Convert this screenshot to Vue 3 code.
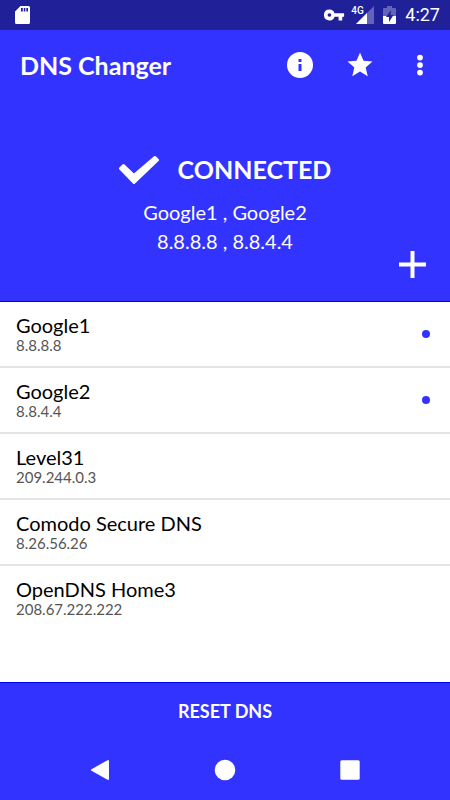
<script setup>
import { ref, computed } from 'vue'

const servers = ref([
  { name: 'Google1', address: '8.8.8.8', active: true },
  { name: 'Google2', address: '8.8.4.4', active: true },
  { name: 'Level31', address: '209.244.0.3', active: false },
  { name: 'Comodo Secure DNS', address: '8.26.56.26', active: false },
  { name: 'OpenDNS Home3', address: '208.67.222.222', active: false },
])

const active = computed(() => servers.value.filter((s) => s.active))
const activeNames = computed(() => active.value.map((s) => s.name).join(' , '))
const activeAddresses = computed(() => active.value.map((s) => s.address).join(' , '))
</script>

<template>
  <div class="app">
    <div class="status-bar">
      <svg class="sd" width="15" height="18" viewBox="0 0 15 18" aria-hidden="true">
        <path fill="#fff" fill-rule="evenodd" d="M5.500 0H13.500Q15 0 15 1.500V16.500Q15 18 13.500 18H1.500Q0 18 0 16.500V5.500ZM6 2V5.500H7.800V2ZM8.800 2V5.500H10.300V2ZM11.300 2V5.500H13V2Z" />
      </svg>
      <div class="status-icons">
        <svg class="key" width="22" height="22" viewBox="0 0 24 24" aria-hidden="true">
          <path fill="#fff" d="M12.650 10A5.990 5.990 0 0 0 7 6a6 6 0 1 0 5.650 8H17v4h4v-4h2v-4H12.650zM7 14a2 2 0 1 1 0-4 2 2 0 0 1 0 4z" />
        </svg>
        <div class="signal">
          <span class="network">4G</span>
          <svg width="18" height="18" viewBox="0 0 18 18" aria-hidden="true">
            <path fill="#6363b8" d="M18 0V18H0Z" />
            <path fill="#fff" d="M11 7V18H0Z" />
          </svg>
        </div>
        <svg class="battery" width="13" height="18" viewBox="0 0 13 18" aria-hidden="true">
          <path fill="#6363b8" d="M4 0H9V2H12Q13 2 13 3V10H0V3Q0 2 1 2H4Z" />
          <path fill="#fff" d="M0 10H13V17Q13 18 12 18H1Q0 18 0 17Z" />
          <path fill="#202099" d="M8 4L3 11H6V16L10.500 9H7.500Z" />
        </svg>
        <time class="clock">4:27</time>
      </div>
    </div>

    <header class="toolbar">
      <h1>DNS Changer</h1>
      <div class="actions">
        <button type="button" aria-label="Information">
          <svg width="32" height="32" viewBox="0 0 32 32">
            <path fill="#fff" fill-rule="evenodd" d="M16 3a13 13 0 1 0 0 26 13 13 0 0 0 0-26zM14.500 10h3v3h-3zM14.500 15h3v7h-3z" />
          </svg>
        </button>
        <button type="button" aria-label="Rate">
          <svg width="30" height="30" viewBox="0 0 24 24">
            <path fill="#fff" d="M12 17.270 18.180 21l-1.640-7.030L22 9.240l-7.190-.61L12 2 9.190 8.630 2 9.240l5.460 4.730L5.820 21z" />
          </svg>
        </button>
        <button type="button" aria-label="More options">
          <svg width="30" height="30" viewBox="0 0 24 24" fill="#fff">
            <circle cx="12" cy="6" r="2.300" />
            <circle cx="12" cy="12" r="2.300" />
            <circle cx="12" cy="18" r="2.300" />
          </svg>
        </button>
      </div>
    </header>

    <section class="hero">
      <div class="state">
        <svg width="40" height="30" viewBox="0 0 40 30" aria-hidden="true">
          <path fill="#fff" stroke="#fff" stroke-width="3" stroke-linejoin="round" d="M4.500 10.500L15 20.500L36 2.500L38.500 5L15 27.500L1.500 13.500Z" />
        </svg>
        <strong>CONNECTED</strong>
      </div>
      <p>{{ activeNames }}</p>
      <p>{{ activeAddresses }}</p>
      <button class="add" type="button" aria-label="Add server">
        <svg width="27" height="27" viewBox="0 0 27 27">
          <path stroke="#fff" stroke-width="4" d="M13.500 0V27M0 13.500H27" />
        </svg>
      </button>
    </section>

    <main>
      <ul class="servers">
        <li v-for="server in servers" :key="server.name">
          <div class="entry">
            <div class="name">{{ server.name }}</div>
            <div class="address">{{ server.address }}</div>
          </div>
          <span v-if="server.active" class="dot"></span>
        </li>
      </ul>
    </main>

    <footer>
      <button class="reset" type="button">RESET DNS</button>
      <nav>
        <button type="button" aria-label="Back">
          <svg width="22" height="22" viewBox="0 0 22 22">
            <path fill="#fff" stroke="#fff" stroke-width="2" stroke-linejoin="round" d="M19 2V20L3 11Z" />
          </svg>
        </button>
        <button type="button" aria-label="Home">
          <svg width="22" height="22" viewBox="0 0 22 22">
            <circle cx="11" cy="11" r="10.300" fill="#fff" />
          </svg>
        </button>
        <button type="button" aria-label="Recent apps">
          <svg width="22" height="22" viewBox="0 0 22 22">
            <rect x="1.300" y="1.300" width="19.400" height="19.400" rx="1.500" fill="#fff" />
          </svg>
        </button>
      </nav>
    </footer>
  </div>
</template>

<style>
body {
  margin: 0;
}
</style>

<style scoped>
.app {
  display: flex;
  flex-direction: column;
  min-height: 100vh;
  background: #fff;
  color: #fff;
  font-family: Lato, sans-serif;
}

button {
  display: flex;
  align-items: center;
  justify-content: center;
  padding: 0;
  border: 0;
  background: none;
  color: inherit;
  font: inherit;
  cursor: pointer;
}

.status-bar {
  display: flex;
  align-items: center;
  justify-content: space-between;
  height: 30px;
  padding: 0 10px 0 15px;
  background: #202099;
}

.status-icons {
  display: flex;
  align-items: center;
  gap: 9px;
}

.signal {
  display: flex;
  align-items: flex-end;
  position: relative;
  padding-left: 2px;
}

.network {
  position: absolute;
  top: 0;
  left: -3px;
  font: 500 10px/10px Roboto, sans-serif;
}

.clock {
  font: 400 18px/30px Roboto, sans-serif;
}

.toolbar {
  display: flex;
  align-items: center;
  justify-content: space-between;
  height: 70px;
  padding-left: 20px;
  background: #3333ff;
}

h1 {
  margin: 0;
  font-size: 25px;
  font-weight: 700;
  line-height: 30px;
}

.actions {
  display: flex;
}

.actions button {
  width: 60px;
  height: 60px;
}

.hero {
  position: relative;
  padding: 54px 0 45px;
  border-bottom: 1px solid #0000e6;
  background: #3333ff;
  text-align: center;
}

.state {
  display: flex;
  align-items: center;
  justify-content: center;
  gap: 19px;
  margin-bottom: 13px;
  font-size: 25px;
  line-height: 31px;
}

.hero p {
  margin: 0;
  font-size: 20px;
  line-height: 29px;
}

.add {
  position: absolute;
  right: 14px;
  bottom: 13px;
  width: 47px;
  height: 47px;
}

main {
  flex: 1;
}

.servers {
  margin: 0;
  padding: 0;
  list-style: none;
}

.servers li {
  display: flex;
  align-items: center;
  justify-content: space-between;
  box-sizing: border-box;
  height: 66px;
  padding: 0 20px 0 16px;
  border-bottom: 2px solid #e4e4e4;
}

.servers li:last-child {
  border-bottom-color: transparent;
}

.entry {
  padding-bottom: 2px;
}

.name {
  color: #000;
  font-size: 20px;
  line-height: 23px;
}

.address {
  color: #555;
  font-size: 15px;
  line-height: 16px;
}

.dot {
  width: 8px;
  height: 8px;
  border-radius: 50%;
  background: #3333ff;
}

footer {
  border-top: 1px solid #0000ff;
  background: #3333ff;
}

.reset {
  width: 100%;
  height: 57px;
  padding-bottom: 2px;
  font-size: 18px;
  font-weight: 700;
}

nav {
  display: flex;
  justify-content: space-between;
  padding: 0 70px;
}

nav button {
  width: 60px;
  height: 60px;
}
</style>
